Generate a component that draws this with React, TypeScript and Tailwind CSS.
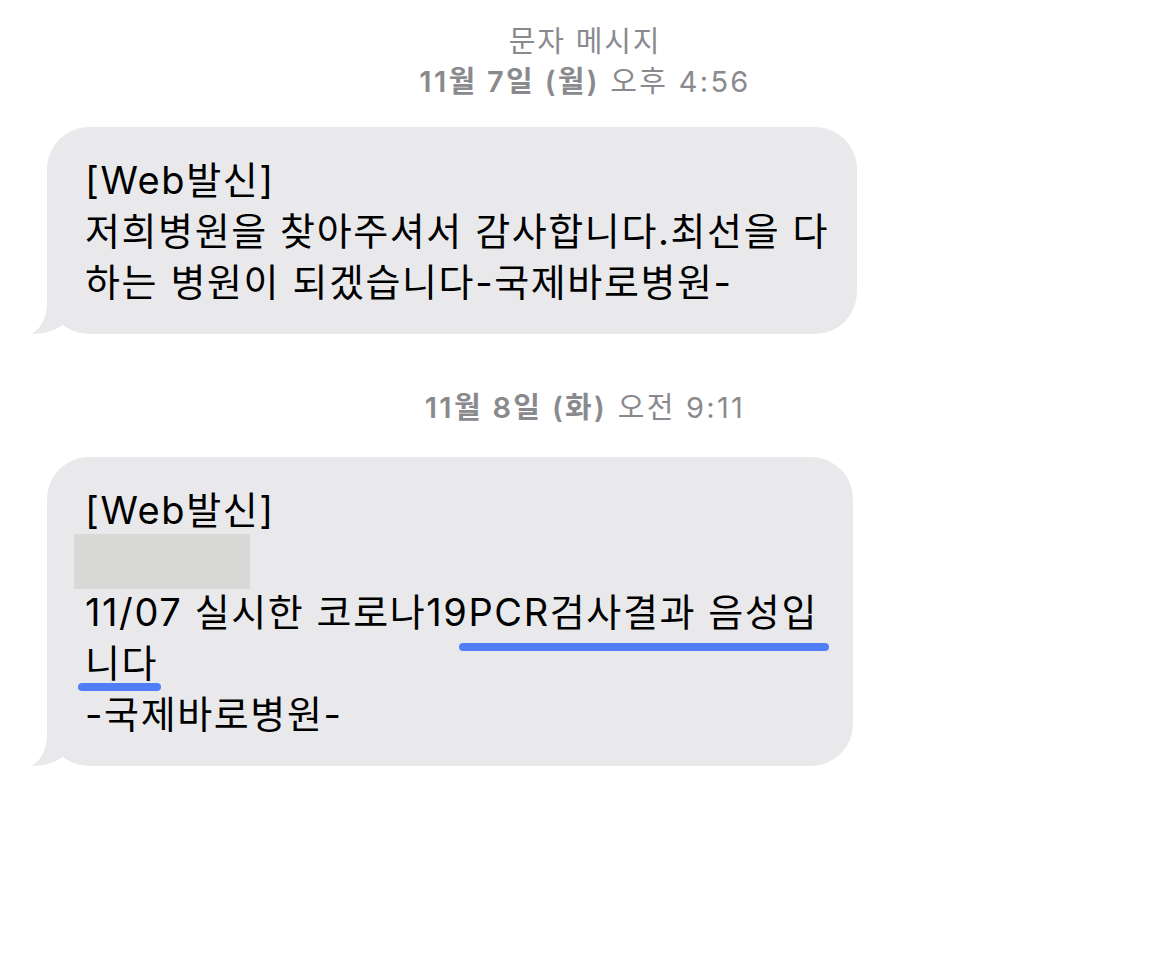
import React from "react";

const font = {
  fontFamily: '"Inter", "Noto Sans CJK KR", sans-serif',
};

function Tail() {
  return (
    <svg
      className="absolute bottom-0 left-[-15px]"
      width="80"
      height="42"
      viewBox="0 0 80 42"
    >
      <path
        d="M15 0 L15 10 C15 26 9 36 0 42 C14 42 25 38 35 30 C46 38 58 42 78 42 L78 0 Z"
        fill="#e9e9eb"
      />
    </svg>
  );
}

function Bubble({ children, width }: { children: React.ReactNode; width: string }) {
  return (
    <div className={`relative ml-[47px] ${width}`}>
      <Tail />
      <div className="relative rounded-[42px] bg-[#e9e9eb] pl-[38px] pt-[28px] pb-[26px] text-[38px] leading-[51px] tracking-[1.6px] text-black">
        {children}
      </div>
    </div>
  );
}

function Stamp({ date, time }: { date: string; time: string }) {
  return (
    <div className="text-center text-[29px] leading-[40px] tracking-[2.3px] text-[#8a8a8e]">
      <span className="font-semibold">{date}</span> <span>{time}</span>
    </div>
  );
}

export default function App() {
  return (
    <div className="min-h-[960px] w-[1170px] bg-white" style={font}>
      <div className="pt-[22px]">
        <div className="text-center text-[29px] leading-[40px] tracking-[1.8px] text-[#8a8a8e]">
          문자 메시지
        </div>
        <Stamp date="11월 7일 (월)" time="오후 4:56" />
      </div>

      <div className="mt-[25px]">
        <Bubble width="w-[810px]">
          <div className="whitespace-nowrap">[Web발신]</div>
          <div className="whitespace-nowrap">저희병원을 찾아주셔서 감사합니다.최선을 다</div>
          <div className="whitespace-nowrap">하는 병원이 되겠습니다-국제바로병원-</div>
        </Bubble>
      </div>

      <div className="mt-[54px]">
        <Stamp date="11월 8일 (화)" time="오전 9:11" />
      </div>

      <div className="mt-[29px]">
        <Bubble width="w-[806px]">
          <div className="whitespace-nowrap">[Web발신]</div>
          <div className="-my-[2px] -ml-[11px] h-[55px] w-[176px] bg-[#d8d9d7]" />
          <div className="whitespace-nowrap">
            11/07 실시한 코로나19
            <span className="relative inline-block">
              PCR검사결과 음성입
              <span className="absolute left-[-10px] right-[-11px] top-[56px] h-[8px] rounded-full bg-[#4f7ef8]" />
            </span>
          </div>
          <div className="whitespace-nowrap">
            <span className="relative inline-block">
              니다
              <span className="absolute left-[-7px] right-[-3px] top-[45px] h-[8px] rounded-full bg-[#4f7ef8]" />
            </span>
          </div>
          <div className="whitespace-nowrap">-국제바로병원-</div>
        </Bubble>
      </div>
    </div>
  );
}
